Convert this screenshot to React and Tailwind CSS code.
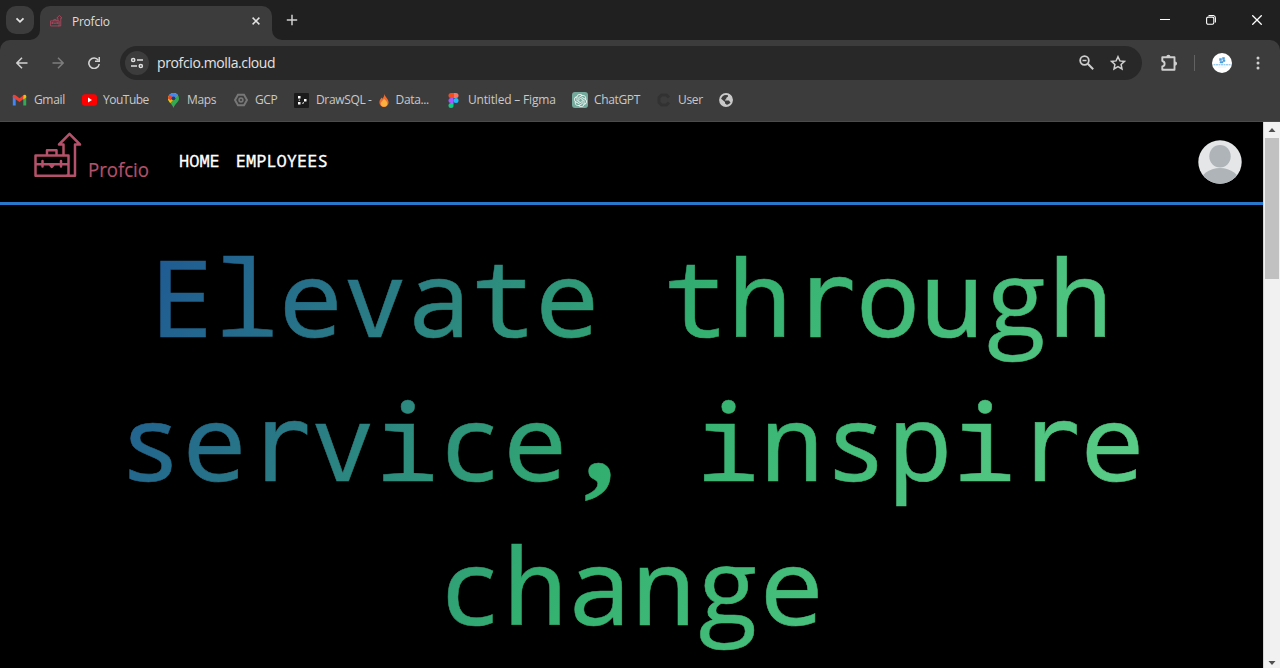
import { SiOpenai } from "react-icons/si";

const UI = "font-['Open_Sans','Noto_Sans',sans-serif]";
const MONO = "font-['Noto_Sans_Mono','DejaVu_Sans_Mono',monospace]";

function Icon({ children, className, box = "0 0 24 24" }) {
  return (
    <svg viewBox={box} className={`shrink-0 ${className}`} fill="none">
      {children}
    </svg>
  );
}

function TitleBar() {
  return (
    <div className="flex h-10 shrink-0 bg-[#202020]">
      <div className="flex w-10 items-start pl-1.5 pt-1.5">
        <div className="flex size-7 items-center justify-center rounded-[10px] bg-[#3c3c3c]">
          <Icon className="size-2.5" box="0 0 10 10">
            <path d="M1.5 3.3 5 6.8l3.5-3.5" stroke="#e3e3e3" strokeWidth="1.8" />
          </Icon>
        </div>
      </div>
      <div className="relative mt-1.5 flex h-[34px] w-[232px] items-center rounded-t-[10px] bg-[#3c3c3c] pb-1">
        <svg viewBox="0 0 10 10" className="absolute -left-2.5 bottom-0 size-2.5"><path d="M10 0v10H0A10 10 0 0 0 10 0" fill="#3c3c3c" /></svg>
        <svg viewBox="0 0 10 10" className="absolute -right-2.5 bottom-0 size-2.5"><path d="M0 0v10h10A10 10 0 0 1 0 0" fill="#3c3c3c" /></svg>
        <Icon className="ml-2.5 h-3 w-3" box="0 0 48 48">
          <Toolbox width={3.2} color="#b5485f" />
        </Icon>
        <span className="ml-2.5 mt-0.5 text-[12px] leading-4 tracking-[-0.25px] text-[#dedede]">Profcio</span>
        <Icon className="ml-auto mr-3 size-2" box="0 0 8 8">
          <path d="m.6.6 6.8 6.8m0-6.8L.6 7.4" stroke="#e3e3e3" strokeWidth="1.5" />
        </Icon>
      </div>
      <Icon className="ml-3.5 mt-3.5 size-3" box="0 0 12 12">
        <path d="M6 .8v10.4M.8 6h10.4" stroke="#d0d0d0" strokeWidth="1.5" />
      </Icon>
      <div className="ml-auto flex h-10 items-center gap-9 pr-[18px]">
        <Icon className="h-2.5 w-2.5" box="0 0 10 10"><path d="M0 4.5h10" stroke="#fff" /></Icon>
        <Icon className="size-2.5" box="0 0 10 10">
          <rect x=".6" y="2.1" width="7.2" height="7.2" rx="1.5" stroke="#fff" strokeWidth="1.1" />
          <path d="M2.5.5H7A2.5 2.5 0 0 1 9.4 3v4.5" stroke="#fff" strokeWidth="1.1" />
        </Icon>
        <Icon className="size-2.5" box="0 0 10 10"><path d="m.3.3 9.4 9.4m0-9.4L.3 9.7" stroke="#fff" strokeWidth="1.3" /></Icon>
      </div>
    </div>
  );
}

function Toolbox({ width, color }) {
  return (
    <g stroke={color} strokeWidth={width} strokeLinejoin="round" strokeLinecap="round">
      <path d="M3.500 23.500h33v20.300h-33zM3.500 32.200h33M15 23v-4.700h9.500V23M10.500 29v5.500M29 29v5.500M18.200 33l1.600 1.800 1.700-1.800" />
      <path d="M31.500 23v-10.500h-4.500L37.500 1.800 48 12.500h-5v31.300h-8" />
    </g>
  );
}

function Toolbar() {
  return (
    <div className="flex h-[45px] shrink-0 items-center rounded-t-[10px] bg-[#3c3c3c]">
      <Icon className="ml-4 size-3" box="0 0 12 12"><path d="M11.500 6H1M6 .8.900 6 6 11.200" stroke="#d2d2d2" strokeWidth="1.500" /></Icon>
      <Icon className="ml-6 size-3" box="0 0 12 12"><path d="M.5 6H11M6 .8 11.100 6 6 11.200" stroke="#7d7d7d" strokeWidth="1.500" /></Icon>
      <Icon className="ml-6 size-3" box="0 0 12 12">
        <path d="M10.300 3.200A5.200 5.200 0 1 0 11.200 7" stroke="#d2d2d2" strokeWidth="1.600" />
        <path d="M11.300 0v4.300H7" stroke="#d2d2d2" strokeWidth="1.600" />
      </Icon>
      <div className="ml-5 flex h-[34px] w-[1022px] items-center rounded-full bg-[#282828] pl-[5px]">
        <div className="flex size-6 items-center justify-center rounded-full bg-[#3c3c3c]">
          <Icon className="size-3.5" box="0 0 14 14">
            <g stroke="#e0e0e0" strokeWidth="1.500">
              <circle cx="3.200" cy="4" r="1.600" /><path d="M7 4h6M1 10h6" /><circle cx="10.800" cy="10" r="1.600" />
            </g>
          </Icon>
        </div>
        <span className="ml-2 text-[14px] leading-5 tracking-[-0.38px] text-[#e3e3e3]">profcio.molla.cloud</span>
        <Icon className="ml-auto size-[15px]" box="0 0 15 15">
          <circle cx="5.500" cy="5.500" r="4.300" stroke="#cfcfcf" strokeWidth="1.800" />
          <path d="m8.800 8.800 5.400 5.400" stroke="#cfcfcf" strokeWidth="2" /><path d="M3.500 5.500h4" stroke="#cfcfcf" strokeWidth="1.500" />
        </Icon>
        <Icon className="ml-4 mr-4 size-4" box="0 0 16 16">
          <path d="m8 1.700 1.900 4.200 4.600.5-3.400 3.100.9 4.500-4-2.300L4 14l.9-4.500-3.400-3.100 4.600-.5z" stroke="#cfcfcf" strokeWidth="1.500" />
        </Icon>
      </div>
      <Icon className="ml-[18px] size-[18px]" box="0 0 18 18">
        <path d="M2.300 3.300h12.200v12.400H2.300v-3.200c1.400-.2 2.300-1.200 2.300-2.700S3.700 7.300 2.300 7z" stroke="#cfcfcf" strokeWidth="1.900" strokeLinejoin="round" />
        <path d="M6.300 2.900a2.100 2.100 0 0 1 4.200 0zM15 7.500a2.100 2.100 0 0 1 0 4.200z" fill="#cfcfcf" />
      </Icon>
      <div className="ml-4 h-4 w-px bg-[#626262]" />
      <Icon className="ml-[17px] size-5" box="0 0 20 20">
        <circle cx="10" cy="10" r="10" fill="#fff" />
        <path d="M7.500 5.500h2v2h-2zM10.500 4.500h2v2h-2zM8 8.500h3v1.500H8zM11 7h2v1.500h-2z" stroke="#4a9ddd" strokeWidth=".5" fill="#4a9ddd" />
        <path d="M1.500 11.800h17" stroke="#70b5ea" strokeDasharray="2 .5" /><path d="M6 14h8" stroke="#dcebf7" strokeWidth=".7" />
      </Icon>
      <Icon className="ml-[24px] h-4 w-1" box="0 0 4 16">
        <g fill="#d0d0d0"><circle cx="2" cy="3" r="1.500" /><circle cx="2" cy="8" r="1.500" /><circle cx="2" cy="13" r="1.500" /></g>
      </Icon>
    </div>
  );
}

function Bookmark({ width, icon, label, track = "tracking-[-0.35px]" }) {
  return (
    <div className={`flex shrink-0 items-center ${width}`}>
      {icon}
      <span className={`whitespace-nowrap ${track}`}>{label}</span>
    </div>
  );
}

function Bookmarks() {
  return (
    <div className="flex h-9 shrink-0 items-start bg-[#3c3c3c] pl-3 pt-[7px] text-[12px] leading-4 text-[#c9c9c9]">
      <Bookmark width="w-[69px]" label="Gmail" icon={
        <Icon className="mr-[7px] h-3 w-[15px]" box="0 0 15 12">
          <path d="M.8 11.500V2l2.900 1.500v8z" fill="#4285f4" /><path d="M11.300 3.500 14.200 2v9.500h-2.900z" fill="#34a853" />
          <path d="M.8 2.200C.8.600 2.400.3 3.600 1.200l3.900 3 3.900-3v3.800L7.500 8 .8 3.200z" fill="#ea4335" />
          <path d="M11.300 1.200c1.300-1 2.900-.500 2.900 1v1.400l-2.900 2z" fill="#fbbc04" />
        </Icon>} />
      <Bookmark width="w-[86px]" label="YouTube" track="tracking-[-0.5px]" icon={
        <Icon className="ml-px mr-[6px] h-3 w-[15px]" box="0 0 15 12">
          <rect width="15" height="11.500" y=".3" rx="3" fill="#f00" /><path d="m6 3.500 4 2.500-4 2.500z" fill="#fff" />
        </Icon>} />
      <Bookmark width="w-[67px]" label="Maps" icon={
        <Icon className="mr-[7px] h-[15px] w-[13px]" box="0 0 13 15">
          <path d="M6.500 0A5.500 5.500 0 0 0 1 5.500c0 3.500 3.700 4.500 5.500 9.500 1.800-5 5.500-6 5.500-9.500A5.500 5.500 0 0 0 6.500 0" fill="#34a853" />
          <path d="M1 5.500A5.500 5.500 0 0 1 10.700 2L3.300 10C1.900 8.400 1 7.400 1 5.500" fill="#fbbc04" />
          <path d="M2.200 2A5.500 5.500 0 0 1 10.700 2L6 7.500z" fill="#4285f4" /><path d="M2.200 2A6 6 0 0 0 1 5.500l3 2 2-3.500z" fill="#ea4335" />
          <circle cx="6.500" cy="5.300" r="1.900" fill="#263c66" />
        </Icon>} />
      <Bookmark width="w-[60px]" label="GCP" track="tracking-[-0.4px]" icon={
        <Icon className="mr-[7px] h-[14px] w-[14px]" box="0 0 14 14">
          <path d="M4 1.700h6L13 7l-3 5.300H4L1 7z" stroke="#777" strokeWidth="2" /><circle cx="7" cy="7" r="1.900" stroke="#777" strokeWidth="1.600" />
        </Icon>} />
      <Bookmark width="w-[154px]" track="tracking-[-0.35px]" label={
        <span className="flex items-center">DrawSQL -
          <Icon className="ml-[7px] mr-[7px] h-[13px] w-[10px]" box="0 0 10 13">
            <path d="M5.300 0C6 3 9.600 4.800 9.600 8.500A4.600 4.600 0 0 1 5 13 4.600 4.600 0 0 1 .400 8.500C.400 6.500 1.500 5 2.500 3.500l.9 1.300C4.500 3.500 5.300 2 5.300 0" fill="#ed6d30" />
            <path d="M5 5c2 1.500 3.300 2.800 3.300 4.500C8.300 11.500 7 12.800 5 12.800s-3.300-1.300-3.300-3.300C1.700 8 3.500 7 5 5" fill="#fbb03f" />
          </Icon>Data...</span>} icon={
        <Icon className="mr-[7px] h-[15px] w-[15px]" box="0 0 15 15">
          <rect width="15" height="15" rx="1" fill="#1b1b1b" /><path d="M4 3h2.500v2.500H4zM4 9h2.500v2.500H4zM10 6h2.500v2.500H10z" fill="#fff" /><path d="M5.300 6.500v1.500M8 10.300h1.500V9" stroke="#bbb" />
        </Icon>} />
      <Bookmark width="w-[124px]" label="Untitled – Figma" track="tracking-[-0.18px]" icon={
        <Icon className="mr-[9px] h-[15px] w-[11px]" box="0 0 11 15">
          <path d="M5.500 0H3a2.500 2.500 0 0 0 0 5h2.500z" fill="#f24e1e" /><path d="M5.500 0H8a2.500 2.500 0 0 1 0 5H5.500z" fill="#ff7262" />
          <path d="M5.500 5H3a2.500 2.500 0 0 0 0 5h2.500z" fill="#a259ff" /><circle cx="8" cy="7.500" r="2.500" fill="#1abcfe" />
          <path d="M5.500 10H3a2.500 2.500 0 1 0 2.500 2.500z" fill="#0acf83" />
        </Icon>} />
      <Bookmark width="w-[84px]" label="ChatGPT" icon={
        <span className="mr-[6px] flex size-4 shrink-0 items-center justify-center rounded-[3px] bg-[#74aa9c] text-[#eef7f5]">
          <SiOpenai className="size-[13px]" />
        </span>} />
      <Bookmark width="w-[63px]" label="User" icon={
        <Icon className="ml-px mr-[7px] h-[14px] w-[14px]" box="0 0 14 14"><path d="M12 4.500 9.500 2h-5L2 4.500v5L4.500 12h5L12 9.500" stroke="#323232" strokeWidth="3" /></Icon>} />
      <Icon className="mt-px size-3.5" box="0 0 14 14">
        <circle cx="7" cy="7" r="6" stroke="#c9c9c9" strokeWidth="1.800" fill="#3c3c3c" />
        <path d="M1.200 5 6 9v1.500l1.500.8-.3 2C3.500 13 .800 10 1.200 5M3.500 2.200 7 .8 9 1.500 9 3.500 7.200 5v1.500H6v1h4l1 1.500 1.800.5.700-2.500L12.500 3 9 .8" fill="#c9c9c9" />
      </Icon>
    </div>
  );
}

function Header() {
  return (
    <header className="flex h-[83px] shrink-0 border-b-[3px] border-[#2877cd] pl-8">
      <Icon className="mt-2.5 size-12 overflow-visible" box="0 0 48 48"><Toolbox width={2.500} color="#b5516a" /></Icon>
      <svg className="ml-2 mt-[31px] h-8 w-[61px] overflow-visible font-['Open_Sans',sans-serif]" viewBox="0 0 61 32">
        <text x="0" y="23.500" fontSize="20.500" textLength="61" lengthAdjust="spacingAndGlyphs" fill="#b5516a" stroke="#b5516a" strokeWidth=".2">Profcio</text>
      </svg>
      <nav className={`ml-[30px] mt-[27px] flex gap-4 text-[17px] leading-6 text-white [-webkit-text-stroke:0.3px_#fff] ${MONO}`}>
        <span>HOME</span><span>EMPLOYEES</span>
      </nav>
      <Icon className="ml-auto mr-[21px] mt-[18px] size-[44px]" box="0 0 44 44">
        <clipPath id="avatar"><circle cx="22" cy="22" r="21.700" /></clipPath>
        <g clipPath="url(#avatar)"><path d="M0 0h44v44H0z" fill="#e4e6e7" /><ellipse cx="22" cy="16.300" rx="10.700" ry="11.300" fill="#aeb4b7" /><ellipse cx="22" cy="43" rx="20" ry="15" fill="#aeb4b7" /></g>
      </Icon>
    </header>
  );
}

function Scrollbar() {
  return (
    <div className="flex w-[17px] shrink-0 flex-col items-center border-l border-[#d5d5d5] bg-[#f1f1f1]">
      <Icon className="h-4 w-4" box="0 0 16 16"><path d="m4.500 10 3.500-4 3.500 4z" fill="#505050" /></Icon>
      <div className="h-[141px] w-3.5 bg-[#c1c1c1]" />
      <Icon className="mt-auto h-4 w-4" box="0 0 16 16"><path d="m4.500 9 3.500 4 3.500-4z" fill="#505050" /></Icon>
    </div>
  );
}

const GLYPH_FONTS = {
  g: "font-['Open_Sans',sans-serif]",
  r: "font-['DejaVu_Sans_Mono',monospace]",
  ",": "font-['Liberation_Serif',serif] font-bold text-[124px]",
};

// Letters with their own face keep the monospace cell width.
function HeadingLine({ text }) {
  return (
    <span className="block h-[144px] whitespace-nowrap">
      {text.split(/([gr,])/).map((part, i) =>
        GLYPH_FONTS[part] ? (
          <span key={i} className={`inline-block w-[64.14px] text-center leading-none ${GLYPH_FONTS[part]}`}>{part}</span>
        ) : (
          part
        )
      )}
    </span>
  );
}

export default function App() {
  return (
    <div className={`flex h-[668px] w-[1280px] flex-col overflow-hidden bg-[#202020] ${UI}`}>
      <TitleBar />
      <Toolbar />
      <Bookmarks />
      <div className="flex min-h-0 flex-1 border-t border-[#4b4b4b] bg-black">
        <main className="flex min-w-0 flex-1 flex-col overflow-hidden">
          <Header />
          <h1 className={`mx-auto mt-[19px] h-[460px] w-[1030px] shrink-0 bg-[linear-gradient(120deg,#1e5894_3%,#2a7c85_24%,#33b06f_49%,#58cb86_88%)] bg-clip-text text-center text-[106.900px] leading-[144px] text-transparent [-webkit-text-stroke:0.6px_transparent] ${MONO}`}>
            <HeadingLine text="Elevate through" />
            <HeadingLine text="service, inspire" />
            <HeadingLine text="change" />
          </h1>
        </main>
        <Scrollbar />
      </div>
    </div>
  );
}
